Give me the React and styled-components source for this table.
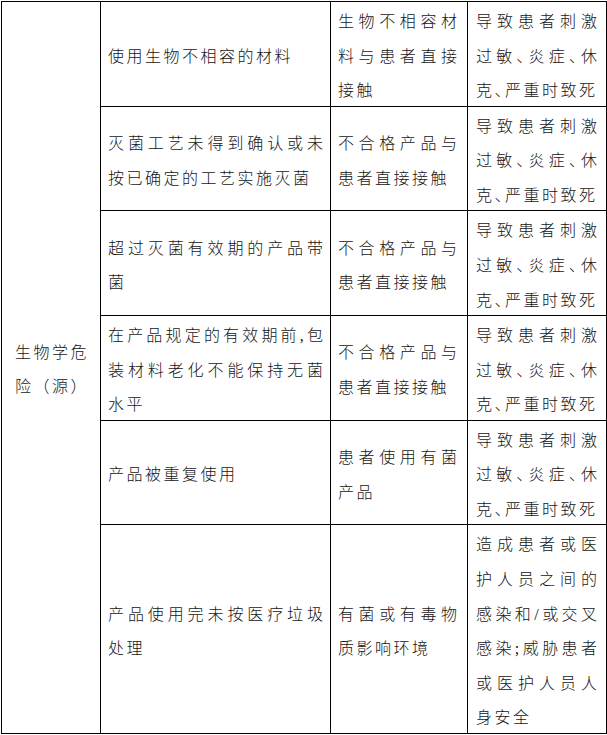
import React from 'react';
import styled, { createGlobalStyle } from 'styled-components';

const GlobalStyle = createGlobalStyle`
  html, body {
    margin: 0;
    padding: 0;
    background: #fff;
  }
`;

const Sheet = styled.div`
  display: grid;
  grid-template-columns: 98px 229px 136px 138px;
  gap: 1px;
  width: max-content;
  margin: 1px 0 0 1px;
  padding: 1px;
  background: #000;
  font-family: "Liberation Serif", "Noto Sans CJK SC", serif;
  font-size: 16px;
  font-weight: 300;
  line-height: 34.57px;
  letter-spacing: 2.5px;
  color: #151515;
`;

const Cell = styled.div`
  display: flex;
  flex-direction: column;
  justify-content: center;
  background: #fff;
  padding: ${({ $pad }) => $pad};
  grid-row: ${({ $span }) => ($span ? '1 / span 6' : 'auto')};
  font-feature-settings: ${({ $halt }) => ($halt ? '"halt"' : 'normal')};
`;

const Line = styled.div`
  text-align: left;
  text-align-last: ${({ $justify }) => ($justify ? 'justify' : 'left')};
`;

const Ink = styled.span`
  line-height: 20px;
  vertical-align: -3px;
`;

const HARM = ['导致患者刺激', '过敏、炎症、休', '克、严重时致死'];
const CONTACT = ['不合格产品与', '患者直接接触'];

const rows = [
  {
    cause: ['使用生物不相容的材料'],
    event: ['生物不相容材', '料与患者直接', '接触'],
    harm: HARM,
  },
  {
    cause: ['灭菌工艺未得到确认或未', '按已确定的工艺实施灭菌'],
    event: CONTACT,
    harm: HARM,
  },
  {
    cause: ['超过灭菌有效期的产品带', '菌'],
    event: CONTACT,
    harm: HARM,
  },
  {
    cause: ['在产品规定的有效期前,包', '装材料老化不能保持无菌', '水平'],
    event: CONTACT,
    harm: HARM,
  },
  {
    cause: ['产品被重复使用'],
    event: ['患者使用有菌', '产品'],
    harm: HARM,
  },
  {
    cause: ['产品使用完未按医疗垃圾', '处理'],
    event: ['有菌或有毒物', '质影响环境'],
    harm: ['造成患者或医', '护人员之间的', '感染和/或交叉', '感染;威胁患者', '或医护人员人', '身安全'],
  },
];

function Lines({ lines }) {
  return lines.map((text, i) => (
    <Line key={i} $justify={i < lines.length - 1}>
      <Ink>{text}</Ink>
    </Line>
  ));
}

export default function App() {
  return (
    <>
      <GlobalStyle />
      <Sheet>
        <Cell $span $pad="0 4px 0 13px">
          <Line>
            <Ink>生物学危</Ink>
          </Line>
          <Line>
            <Ink>险（源）</Ink>
          </Line>
        </Cell>
        {rows.map((row, i) => (
          <React.Fragment key={i}>
            <Cell $pad="0 4.5px 0 7px">
              <Lines lines={row.cause} />
            </Cell>
            <Cell $pad="0 7.5px 0 7px">
              <Lines lines={row.event} />
            </Cell>
            <Cell $pad="0 6.5px 0 8px" $halt>
              <Lines lines={row.harm} />
            </Cell>
          </React.Fragment>
        ))}
      </Sheet>
    </>
  );
}
